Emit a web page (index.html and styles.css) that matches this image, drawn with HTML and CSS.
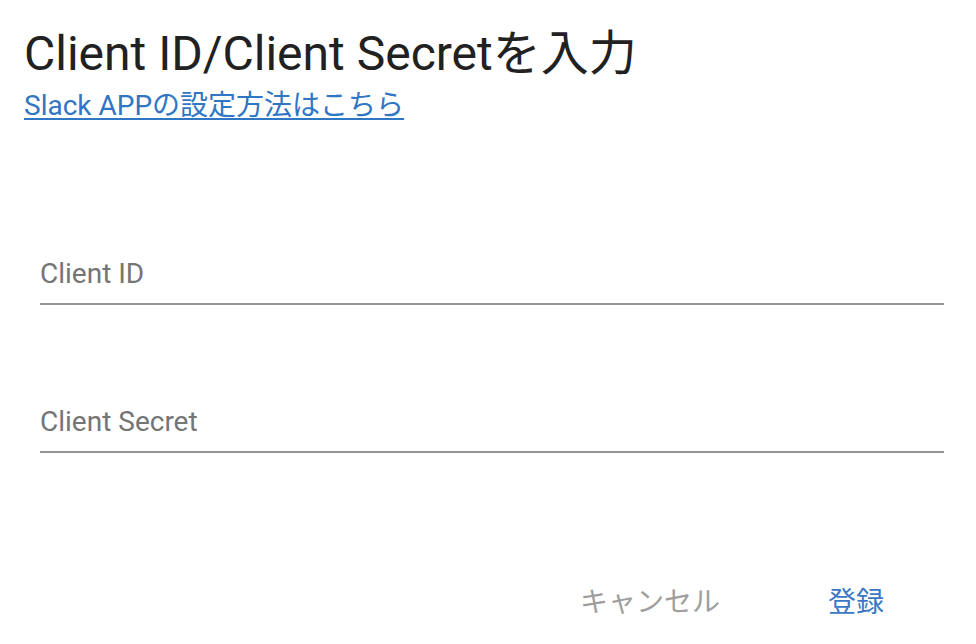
FILE: index.html
```html
<!DOCTYPE html>
<html lang="ja">
<head>
<meta charset="utf-8">
<title>Client ID/Client Secretを入力</title>
<link rel="stylesheet" href="styles.css">
</head>
<body>
<div class="dialog">
  <h1 class="title">Client ID/Client Secretを入力</h1>
  <a class="link" href="#">Slack APPの設定方法はこちら</a>
  <div class="fields">
    <label class="field">
      <span class="label">Client ID</span>
    </label>
    <label class="field">
      <span class="label">Client Secret</span>
    </label>
  </div>
  <div class="actions">
    <button class="btn btn-cancel">キャンセル</button>
    <button class="btn btn-ok">登録</button>
  </div>
</div>
</body>
</html>
```
FILE: styles.css
```css
html, body {
  margin: 0;
  padding: 0;
  background: #ffffff;
}
body {
  font-family: Roboto, "Noto Sans CJK JP", sans-serif;
}
.dialog {
  width: 976px;
  height: 644px;
  box-sizing: border-box;
  padding: 24px 32px 0 24px;
  display: flex;
  flex-direction: column;
}
.title {
  margin: 0;
  font-size: 48px;
  font-weight: 400;
  line-height: 60px;
  color: #212121;
}
.link {
  align-self: flex-start;
  margin-top: 4px;
  font-size: 28px;
  line-height: 36px;
  color: #2f76c4;
  text-decoration: underline;
  text-underline-offset: 3px;
}
.fields {
  margin-left: 16px;
  margin-top: 132px;
  display: flex;
  flex-direction: column;
  gap: 99px;
}
.field {
  display: block;
  border-bottom: 2px solid #949494;
  padding-bottom: 11px;
}
.label {
  font-size: 28px;
  line-height: 36px;
  color: #757575;
}
.actions {
  margin-top: 132px;
  display: flex;
  justify-content: flex-end;
  padding-right: 36px;
  gap: 60px;
}
.btn {
  font-family: Roboto, "Noto Sans CJK JP", sans-serif;
  font-size: 28px;
  line-height: 36px;
  background: none;
  border: none;
  padding: 0 24px;
  cursor: pointer;
}
.btn-cancel {
  color: #9e9e9e;
}
.btn-ok {
  color: #3a78c6;
}
```
